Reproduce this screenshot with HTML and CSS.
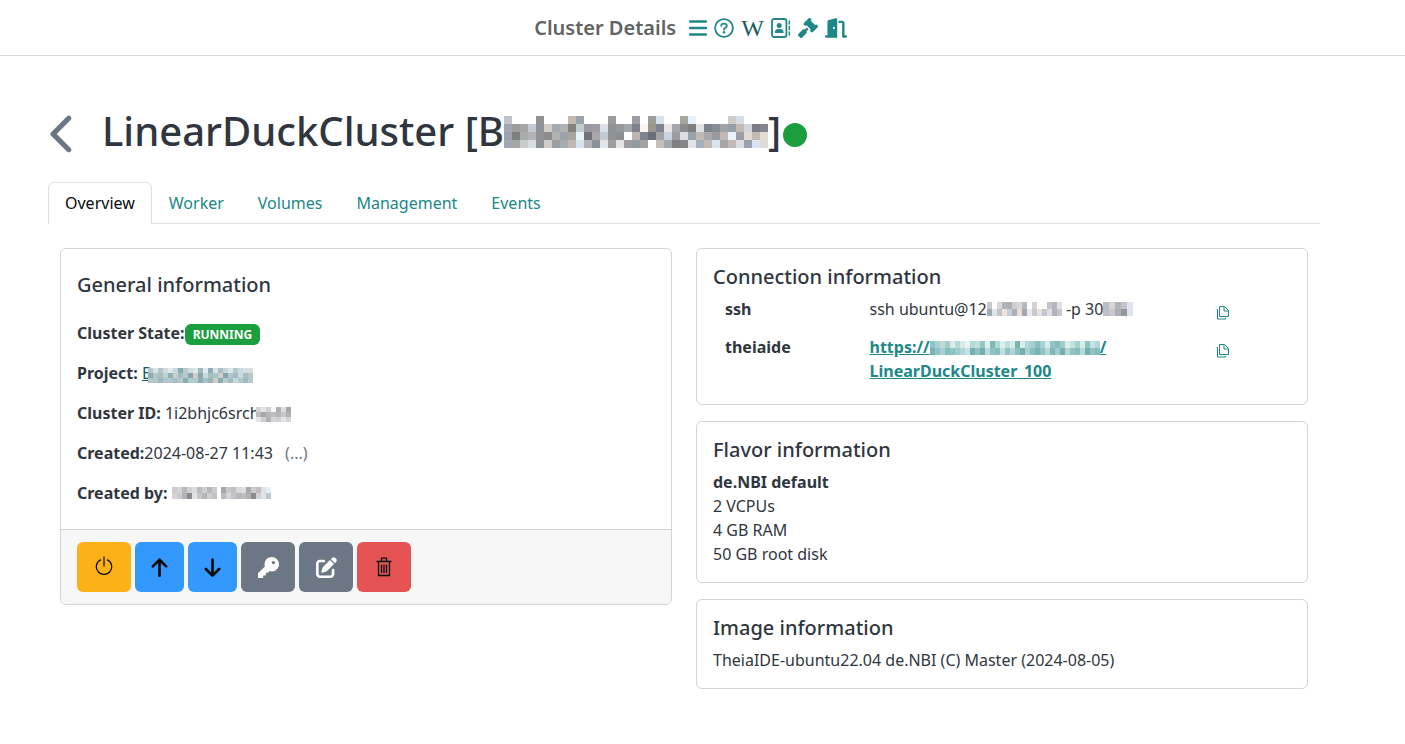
FILE: index.html
```html
<!DOCTYPE html>
<html lang="en">
<head>
<meta charset="utf-8">
<title>Cluster Details</title>
<link rel="stylesheet" href="styles.css">
</head>
<body>
<header class="topbar">
  <h1 class="topbar-title">Cluster Details</h1>
  <nav class="topbar-nav" aria-label="Shortcuts">
    <a href="#menu" aria-label="Menu"><svg width="18" height="20" viewBox="0 0 18 20"><path d="M1 3.500h16M1 10h16M1 16.500h16" fill="none" stroke="currentColor" stroke-width="2.300" stroke-linecap="round"/></svg></a>
    <a href="#help" aria-label="Help"><svg width="20" height="20" viewBox="0 0 20 20"><circle cx="10" cy="10" r="8.900" fill="none" stroke="currentColor" stroke-width="1.800"/><path d="M7.200 7.700C7.200 6.200 8.300 5.700 9.900 5.700c1.700 0 2.900.9 2.900 2.200 0 1.600-1.300 1.800-2.800 3v.7" fill="none" stroke="currentColor" stroke-width="1.800" stroke-linecap="round"/><circle cx="10" cy="14.200" r="1.250" fill="currentColor"/></svg></a>
    <a href="#wiki" class="wiki" aria-label="Wiki">W</a>
    <a href="#contacts" aria-label="Contacts"><svg width="20" height="20" viewBox="0 0 20 20"><rect x="1" y="1" width="14.400" height="18" rx="2" fill="none" stroke="currentColor" stroke-width="1.800"/><circle cx="8.200" cy="7.600" r="2.500" fill="currentColor"/><path d="M3.800 14.600c0-2.200 1.500-3.500 3.400-3.500h2c1.900 0 3.400 1.300 3.400 3.500 0 .3-.2.500-.5.500H4.300c-.3 0-.5-.2-.5-.5z" fill="currentColor"/><path d="M18.300 3v3M18.300 8.500v3M18.300 14v3" stroke="currentColor" stroke-width="1.400" stroke-linecap="round"/></svg></a>
    <a href="#rules" aria-label="Rules"><svg width="20" height="20" viewBox="0 0 512 512"><path fill="currentColor" d="M318.600 9.400c-12.500-12.500-32.800-12.500-45.300 0l-120 120c-12.500 12.500-12.500 32.800 0 45.300l16 16c12.500 12.500 32.800 12.500 45.300 0l4-4L325.400 293.400l-4 4c-12.500 12.500-12.500 32.800 0 45.300l16 16c12.500 12.500 32.800 12.500 45.300 0l120-120c12.500-12.500 12.500-32.800 0-45.300l-16-16c-12.500-12.500-32.800-12.500-45.300 0l-4 4L330.600 74.600l4-4c12.500-12.500 12.500-32.800 0-45.300l-16-16zm-152 288c-12.500-12.500-32.800-12.500-45.300 0l-112 112c-12.500 12.500-12.500 32.800 0 45.300l48 48c12.500 12.500 32.800 12.500 45.300 0l112-112c12.500-12.500 12.500-32.800 0-45.300l-1.400-1.400L272 285.300 226.700 240 168 298.700l-1.400-1.300z"/></svg></a>
    <a href="#logout" aria-label="Log out"><svg width="22" height="20" viewBox="0 0 576 512"><path fill="currentColor" d="M320 32c0-9.900-4.500-19.200-12.300-25.200S289.800-1.400 280.200 1l-179.900 45C79 51.300 64 70.500 64 92.500V448H32c-17.700 0-32 14.300-32 32s14.300 32 32 32h288V32zM256 256c0 17.700-10.700 32-24 32s-24-14.300-24-32 10.700-32 24-32 24 14.300 24 32zM352 64v64h96v352c0 17.700 14.300 32 32 32h64c17.700 0 32-14.300 32-32s-14.300-32-32-32h-32V128c0-35.300-28.700-64-64-64h-96z"/></svg></a>
  </nav>
</header>

<main class="page">
  <div class="heading">
    <a href="#back" class="back" aria-label="Back"><svg width="27" height="42" viewBox="0 0 320 512"><path fill="currentColor" d="M9.400 233.400c-12.500 12.500-12.500 32.800 0 45.300l192 192c12.500 12.500 32.800 12.500 45.300 0s12.500-32.800 0-45.300L77.300 256 246.600 86.600c12.500-12.500 12.500-32.800 0-45.300s-32.800-12.500-45.300 0l-192 192z"/></svg></a>
    <h2 class="cluster-name">LinearDuckCluster [B<span class="mosaic" data-mosaic="owner"></span>]</h2>
    <span class="status-dot"></span>
  </div>

  <nav class="tabs">
    <a href="#overview" class="tab tab-active">Overview</a>
    <a href="#worker" class="tab">Worker</a>
    <a href="#volumes" class="tab">Volumes</a>
    <a href="#management" class="tab">Management</a>
    <a href="#events" class="tab">Events</a>
  </nav>

  <div class="columns">
    <section class="card">
      <div class="card-body general">
        <h3 class="card-title">General information</h3>
        <p><strong>Cluster State:</strong><span class="badge">RUNNING</span></p>
        <p><strong>Project:</strong> <a href="#project" class="project">B<span class="mosaic overlap" data-mosaic="project"></span></a></p>
        <p><strong>Cluster ID:</strong> 1i2bhjc6srch<span class="mosaic overlap" data-mosaic="id"></span></p>
        <p><strong>Created:</strong>2024-08-27 11:43 <span class="more">(...)</span></p>
        <p><strong>Created by:</strong> <span class="mosaic" data-mosaic="first"></span> <span class="mosaic" data-mosaic="last"></span></p>
      </div>
      <div class="card-footer">
        <button type="button" class="btn btn-warning" aria-label="Stop"><svg width="18" height="22" viewBox="0 0 18 22"><path d="M6 3.600A7.700 7.700 0 1 0 12 3.600M9 .5v10" fill="none" stroke="currentColor" stroke-width="1.200"/></svg></button>
        <button type="button" class="btn btn-info" aria-label="Scale up"><svg width="17" height="20" viewBox="0 0 384 480"><path fill="currentColor" d="M214.600 41.400c-12.500-12.500-32.800-12.500-45.300 0l-160 160c-12.500 12.500-12.500 32.800 0 45.300s32.800 12.500 45.300 0L160 141.200V448c0 17.700 14.300 32 32 32s32-14.300 32-32V141.200l105.400 105.400c12.500 12.500 32.800 12.500 45.300 0s12.500-32.800 0-45.300l-160-160z"/></svg></button>
        <button type="button" class="btn btn-info" aria-label="Scale down"><svg width="17" height="20" viewBox="0 0 384 480"><path fill="currentColor" d="M169.400 470.600c12.500 12.500 32.800 12.500 45.300 0l160-160c12.500-12.500 12.500-32.800 0-45.300s-32.800-12.500-45.300 0L224 370.800V64c0-17.700-14.300-32-32-32s-32 14.300-32 32v306.700L54.600 265.400c-12.500-12.500-32.800-12.500-45.300 0s-12.500 32.800 0 45.300l160 160z"/></svg></button>
        <button type="button" class="btn btn-secondary" aria-label="Set password"><svg width="21" height="21" viewBox="0 0 512 512"><path fill="currentColor" d="M336 352c97.200 0 176-78.800 176-176S433.200 0 336 0S160 78.800 160 176c0 18.700 2.900 36.800 8.300 53.700L7 391c-4.500 4.500-7 10.600-7 17v80c0 13.300 10.700 24 24 24h80c13.300 0 24-10.700 24-24V448h40c13.300 0 24-10.700 24-24V384h40c6.400 0 12.500-2.500 17-7l33.300-33.300c16.900 5.400 35 8.300 53.700 8.300zM376 96a40 40 0 1 1 0 80 40 40 0 1 1 0-80z"/></svg></button>
        <button type="button" class="btn btn-secondary" aria-label="Rename"><svg width="21" height="21" viewBox="0 0 512 512"><path fill="currentColor" d="M471.600 21.700c-21.900-21.900-57.300-21.900-79.200 0L362.300 51.700l97.900 97.900 30.100-30.100c21.900-21.900 21.900-57.300 0-79.200L471.600 21.700zm-299.200 220c-6.100 6.100-10.800 13.600-13.500 21.900l-29.600 88.800c-2.900 8.600-.6 18.100 5.800 24.600s15.900 8.700 24.600 5.800l88.800-29.600c8.200-2.700 15.700-7.400 21.900-13.500L437.700 172.300 339.700 74.300 172.400 241.700zM96 64C43 64 0 107 0 160V416c0 53 43 96 96 96H352c53 0 96-43 96-96V320c0-17.700-14.300-32-32-32s-32 14.300-32 32v96c0 17.700-14.300 32-32 32H96c-17.700 0-32-14.300-32-32V160c0-17.700 14.300-32 32-32h96c17.700 0 32-14.300 32-32s-14.300-32-32-32H96z"/></svg></button>
        <button type="button" class="btn btn-danger" aria-label="Delete"><svg width="16" height="21" viewBox="0 0 16 21"><path d="M.5 4.500h15M5.500 4.500V1.200h5v3.300M2.500 4.500v14h11v-14M5.500 7.500v8.500M8 7.500v8.500M10.500 7.500v8.500" fill="none" stroke="currentColor" stroke-width="1.300"/></svg></button>
      </div>
    </section>

    <div class="stack">
      <section class="card">
        <div class="card-body connection">
          <h3 class="card-title">Connection information</h3>
          <div class="endpoint">
            <strong>ssh</strong>
            <span>ssh ubuntu@12<span class="mosaic" data-mosaic="ip"></span> -p 30<span class="mosaic" data-mosaic="port"></span></span>
            <a href="#copy-ssh" class="copy" aria-label="Copy ssh command"><svg width="14" height="16" viewBox="0 0 14 16"><path d="M3.500 1.500h5l4 4v6h-9zM8 1.500V6h4.500M1.500 4v10h8v-1" fill="none" stroke="currentColor"/></svg></a>
          </div>
          <div class="endpoint">
            <strong>theiaide</strong>
            <a href="#theiaide" class="service">https://<span class="mosaic" data-mosaic="host"></span>/<br>LinearDuckCluster_100</a>
            <a href="#copy-url" class="copy" aria-label="Copy theiaide address"><svg width="14" height="16" viewBox="0 0 14 16"><path d="M3.500 1.500h5l4 4v6h-9zM8 1.500V6h4.500M1.500 4v10h8v-1" fill="none" stroke="currentColor"/></svg></a>
          </div>
        </div>
      </section>
      <section class="card">
        <div class="card-body">
          <h3 class="card-title">Flavor information</h3>
          <strong>de.NBI default</strong>
          <div>2 VCPUs</div>
          <div>4 GB RAM</div>
          <div>50 GB root disk</div>
        </div>
      </section>
      <section class="card">
        <div class="card-body">
          <h3 class="card-title">Image information</h3>
          <div>TheiaIDE-ubuntu22.04 de.NBI (C) Master (2024-08-05)</div>
        </div>
      </section>
    </div>
  </div>
</main>
<script src="mosaic.js"></script>
</body>
</html>
```
FILE: styles.css
```css
* {
  box-sizing: border-box;
}

body {
  margin: 0;
  background: #fff;
  color: #303640;
  font: 16px/24px "Noto Sans", sans-serif;
}

a {
  color: #208788;
}

svg {
  display: block;
}

h1, h2, h3, p {
  margin: 0;
}

.topbar {
  display: flex;
  align-items: center;
  justify-content: center;
  gap: 13px;
  height: 56px;
  padding-right: 24px;
  border-bottom: 1px solid #dbdcde;
}

.topbar-title {
  color: #636363;
  font-size: 20px;
  line-height: 28px;
  font-weight: 600;
}

.topbar-nav {
  display: flex;
  align-items: center;
  gap: 7px;
}

.wiki {
  color: #165a5c;
  font: 24px/24px "Liberation Serif", serif;
  text-decoration: none;
}

.page {
  padding: 46px 85px 32px 48px;
}

.heading {
  display: flex;
  align-items: center;
  height: 58px;
  margin-bottom: 22px;
}

.back {
  width: 54px;
  padding: 6px 0 0 2px;
  color: #6b7785;
}

.cluster-name {
  font-size: 40px;
  line-height: 48px;
  font-weight: 500;
  white-space: nowrap;
}

.status-dot {
  width: 24px;
  height: 24px;
  margin: 8px 0 0 2px;
  border-radius: 50%;
  background: #1b9e3e;
}

.mosaic {
  display: inline-block;
  vertical-align: baseline;
}

.mosaic svg {
  display: inline-block;
  vertical-align: baseline;
}

.tabs {
  display: flex;
  border-bottom: 1px solid #dbdfe6;
}

.tab {
  margin-bottom: -1px;
  padding: 8px 16px;
  border: 1px solid transparent;
  text-decoration: none;
}

.tab-active {
  border-color: #dbdfe6 #dbdfe6 #fff;
  border-radius: 6px 6px 0 0;
  background: #fff;
  color: #080a0c;
}

.columns {
  display: grid;
  grid-template-columns: 1fr 1fr;
  gap: 24px;
  align-items: start;
  padding: 24px 12px;
}

.stack {
  display: grid;
  gap: 16px;
}

.card {
  overflow: hidden;
  border: 1px solid #d2d4d5;
  border-radius: 6px;
}

.card-body {
  padding: 16px;
}

.card-title {
  margin-bottom: 8px;
  font-size: 20px;
  line-height: 24px;
  font-weight: 500;
}

.general {
  display: grid;
  gap: 16px;
  padding: 24px 16px;
}

.badge {
  display: inline-block;
  padding: 4px 8px;
  border-radius: 6px;
  background: #1b9e3e;
  color: #fff;
  font-size: 12px;
  line-height: 13px;
  font-weight: 700;
}

.project {
  color: #165a5c;
}

.overlap {
  margin-left: -4px;
}

.more {
  margin-left: 8px;
  color: #6b7785;
}

.card-footer {
  display: flex;
  gap: 4px;
  padding: 12px 16px;
  border-top: 1px solid #d2d4d5;
  background: #f7f7f7;
}

.btn {
  display: flex;
  align-items: center;
  justify-content: center;
  height: 50px;
  padding: 0 16px;
  border: 0;
  border-radius: 6px;
  color: #080a0c;
}

.btn-warning {
  padding: 0 18px;
  background: #fcb116;
}

.btn-info {
  background: #39f;
}

.btn-secondary {
  width: 54px;
  background: #6b7785;
  color: #fff;
}

.btn-danger {
  padding: 0 19px;
  background: #e55353;
}

.connection {
  padding-bottom: 21px;
}

.endpoint {
  display: grid;
  grid-template-columns: 25% 60% 15%;
}

.endpoint > * {
  padding: 0 12px;
}

.endpoint + .endpoint {
  margin-top: 14px;
}

.endpoint > .copy {
  padding-top: 8px;
}

.service {
  font-weight: 700;
}
```
FILE: mosaic.js
```js
// Redacted values: each is a grid of blocks, one list of colours per row.
const mosaics = {
  owner: { w: 8, h: 8, drop: 2, rows: [
    "c0c4d0 fff fff fff 909298 fff fff fff c4bab0 98a2ac fff fff fff 9a9ca2 fff fff 9c9da5 fff a09c98 d8e2ea fff fff a8a49e e4f0fa fff fff fff fff d0cac8 d8dee6 fff fff fff",
    "a0a6b4 9c9c9c a4a6a6 c4cad2 90949a d4ccca a4a8b0 b0b2b4 86827e c4ccd4 98989e 9c9ea2 dde0e8 909298 96989e a0a6ac 7e828c fbf4f0 9c9690 7e8490 e8e4e4 a4a6aa 888e90 7e7e7e dfe3e5 7e828c 888c94 a0a2a8 96a0a8 c4bab4 d0d6dc 7c7c88 84868c",
    "9ca2b0 7e7e7e a8aaac b0b2b4 909298 908c8c b0b2b4 9ca2ac a8a49e e6f2fc 707276 a8a8a8 c4cad4 909298 8c8e92 ffffff bcb4b0 7e8490 686e7a a4a4a4 c8d4de 9c9ca0 dcdee0 98a2ac c0b8b2 a8a8a8 989ca0 c4bab4 e8f2fa 9c9ca8 e0dad4 c4bab4 e4dcd4",
    "a0a6b4 a4a6a8 c8cccc d8dee2 909298 d4ccca 9ca0a4 a8acb0 c0b8b2 d8e4f0 b0b4b8 8c9098 e2e4e8 9c9ea2 e4e4e4 9c9ea2 9098a0 a4a4a4 fff c8c0bc a4a8ac 7e8082 868686 e0e4e6 a4b0bc c4bab4 d8e4ee a8a4a4 c0bab8 dadee2 9ca0ae d8e4f0 e0dad4"] },
  project: { w: 5, h: 5, drop: 4, rows: [
    "b6c9cd d8e4e6 b4c5c9 d0dedf e2e8e9 c4dadc 88abb1 bccacc d0dcdf e0e8ea a3b8bb e0edf0 8eafb4 d8e2e4 a7bec2 c4d6da dae7e9 b5c9cd c7dcdf d4dfe1 d4e0e2",
    "8eabb0 b1c8ca a8c0c2 bed0d2 8eb1b7 d1cdc7 a0bfc2 b6c9cd 84a7ae d1cdc7 8ba8ad c5dadd a6bdc0 a6c5cb d1cdc7 84a7ae b2c7cb a4bbc1 c4dadc a3bfc4 b5c9cd",
    "b5c9cd b2c8ca 9bb9bc b1c8ca b2c8ca a5bec0 b5c9cd 8bacb1 b5c9cd b2c8ca 8bacb1 a7c0c3 98b5b9 d1cdc7 8bacb1 b8cccf a4bbc1 c4dadc b2c8ca 9cb9be b5c9cd"] },
  id: { w: 5, h: 5, drop: 3, rows: [
    "d4d4d8 e4e4e6 d0d0d4 fafafa b0b0b4 dedee0 a8a8ac",
    "bdbdc2 a6a6ac b6b6ba bebec2 b4b4ba c8c8cc b2b2b6",
    "e6e6e8 ceced2 b0b0b8 d6d6da d0d0d4 e4e4e6 d4d4d8"] },
  first: { w: 5, h: 6, drop: 0, rows: [
    "cecace d4d4d8 b6b8bc d0d0d4 dadee2 bcbcc0 cecfd4 b8b8be cacace",
    "d8d2d0 c4ccd6 b2b2b6 8c8888 dee4e4 c6c6ca b4b4b8 cccccf c2c2c6"] },
  last: { w: 5, h: 6, drop: 0, rows: [
    "a8a8ac cacace bcc0c4 d4d6da e0e0e4 a9a9ad c8ccd2 bcbcc0 e2e2e4 e8eef8",
    "bcbcc0 d4d6da c3c3c7 b9b9bd bebec2 b0b0b4 8c8888 cfd2d6 dce4e4 c2c6d2"] },
  ip: { w: 5, h: 7, drop: 1, rows: [
    "c8c8d0 fff d8d8da b0b4b8 b0b0b4 d0d0d4 d8d8dc b6bac0 fff d2d2d6 fff fff c4c4c8 b6b6ba e2e2e6",
    "a4a8b0 e0e4ea c4c4c8 eee2dc c4d0dc b0b0b4 e8e0dc a8a8ac e6eaf0 c8c8cc e8e0dc c6c6cc dce0e4 b4b4b8 c8c8cc"] },
  port: { w: 6, h: 7, drop: 1, rows: [
    "bcbcc0 d6d6da b4b4b8 c4c4c8 e0e4ec",
    "c0c0c4 cacace b0b0b4 98989c dce4ee"] },
  host: { w: 5, h: 7, drop: 2, rows: [
    "8dc3c3 a8d2d2 bcdcdc a4cccc d8ecec b4dada d4ecec e8f4f4 b4d8d8 c0e0e0 94c6c6 e0f0f0 80b8b8 b0d8d8 ddf0f0 c0e0e0 d8ecec 78b4b4 d8ecec b4d8d8 a4d0d0 8cc0c0 a8d2d2 d4eaea 90c4c4 88bcbc 9ccccc d8ecec c4e4e4 a8d2d2 d8ecec 90c4c4 c4e4e4 b0d8d8",
    "78b4b4 90c4c4 a8d2d2 84bebe 90c4c4 9ccccc b0d8d8 c4e4e4 78b0b0 90c4c4 74b0b0 b8dcdc 90c4c4 84bebe c0e0e0 90c4c4 b0d8d8 8cc0c0 74b0b0 a8d2d2 8cc0c0 78b4b4 90c4c4 b4d8d8 80b8b8 a0cccc 74b0b0 b0d8d8 90c4c4 84bebe b8dcdc 74b0b0 90c4c4 84bebe"] }
};

for (const box of document.querySelectorAll("[data-mosaic]")) {
  const { w, h, drop, rows } = mosaics[box.dataset.mosaic];
  const grid = rows.map((row) => row.split(" "));
  const width = grid[0].length * w;
  const height = grid.length * h;
  const cells = grid.map((row, y) => row.map((color, x) =>
    `<rect x="${x * w}" y="${y * h}" width="${w}" height="${h}" fill="#${color}"/>`
  ).join("")).join("");
  box.innerHTML = `<svg width="${width}" height="${height}" viewBox="0 0 ${width} ${height}" shape-rendering="crispEdges" style="margin-bottom:${-drop}px" aria-hidden="true">${cells}</svg>`;
}
```
